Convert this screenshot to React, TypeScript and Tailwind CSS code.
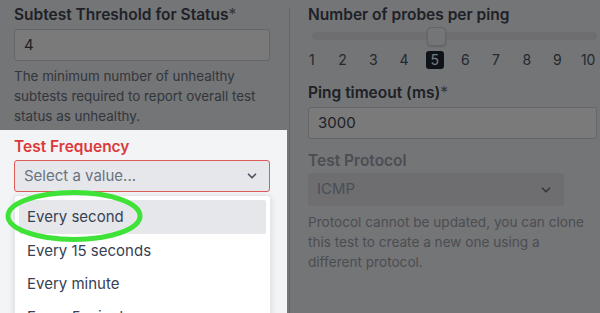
import React from "react";

const Chevron = ({ color }: { color: string }) => (
  <svg width="14" height="14" viewBox="0 0 20 20" fill="none">
    <path d="M5 7.5l5 5 5-5" stroke={color} strokeWidth="2.4" strokeLinecap="round" strokeLinejoin="round" />
  </svg>
);

export default function App() {
  const ticks = [1, 2, 3, 4, 5, 6, 7, 8, 9, 10];
  return (
    <div className="relative w-[600px] h-[313px] overflow-hidden bg-[#f3f4f6] font-['Inter',sans-serif] text-[#3f4652]">
      <div className="flex h-full">
        {/* left column */}
        <div className="w-[289px] shrink-0 pl-[14px] pr-[19px] pt-[5px] relative">
          <div className="text-[15.5px] leading-[20px] font-semibold">
            Subtest Threshold for Status<span className="text-[#6b7280] font-normal">*</span>
          </div>
          <div className="mt-[4px] h-[32px] rounded-[3px] border border-[#d1d5db] bg-white flex items-center px-[9px] text-[15px]">
            4
          </div>
          <div className="mt-[5px] text-[13.4px] leading-[20px] text-[#6b7280] pr-[10px]">
            The minimum number of unhealthy subtests required to report overall test status as unhealthy.
          </div>
          <div className="mt-[11px] text-[15.5px] leading-[20px] font-semibold text-[#dc3a3a]">
            Test Frequency
          </div>
          <div className="mt-[3px] h-[32px] rounded-[3px] border-[1.5px] border-[#e05a5a] bg-[#e5e7eb] flex items-center justify-between pl-[9px] pr-[10px] text-[15px] text-[#6b7280]">
            <span>Select a value...</span>
            <Chevron color="#4b5563" />
          </div>
          {/* dropdown menu */}
          <div className="absolute left-[14px] top-[195px] w-[257px] h-[140px] bg-white rounded-[3px] border border-[#e5e7eb] shadow-[0_2px_6px_rgba(0,0,0,0.12)] px-[4px] pt-[4px] text-[15px] text-[#374151]">
            <div className="h-[34px] rounded-[2px] bg-[#e5e7eb] flex items-center pl-[8px]">Every second</div>
            <div className="h-[34px] flex items-center pl-[8px]">Every 15 seconds</div>
            <div className="h-[33px] flex items-center pl-[8px]">Every minute</div>
            <div className="h-[33px] flex items-center pl-[8px]">Every 5 minutes</div>
          </div>
        </div>
        {/* divider */}
        <div className="w-px bg-[#d1d5db] mt-[8px] shrink-0" />
        {/* right column */}
        <div className="flex-1 pl-[18px] pt-[5px]">
          <div className="text-[15.5px] leading-[20px] font-semibold">Number of probes per ping</div>
          <div className="relative ml-[4px] mr-[10px] mt-[7px] h-[8px] rounded-full bg-[#e5e7eb]">
            <div className="absolute left-[115px] top-[-5px] w-[19px] h-[19px] rounded-[4px] bg-[#f3f4f6] border border-[#d1d5db] shadow-[0_1px_2px_rgba(0,0,0,0.15)]" />
          </div>
          <div className="mt-[11px] flex ml-[-11.4px] w-[310px]">
            {ticks.map((t) => (
              <div key={t} className="w-[30.7px] shrink-0 flex justify-center">
                <span
                  className={
                    t === 5
                      ? "w-[18px] h-[18px] rounded-[3px] bg-[#1f2937] text-white text-[14px] leading-[18px] text-center"
                      : "text-[14px] leading-[18px] text-[#4b5563]"
                  }
                >
                  {t}
                </span>
              </div>
            ))}
          </div>
          <div className="mt-[14px] text-[15.5px] leading-[20px] font-semibold">
            Ping timeout (ms)<span className="text-[#6b7280] font-normal">*</span>
          </div>
          <div className="mt-[4px] mr-[10px] h-[32px] rounded-[3px] border border-[#d1d5db] bg-white flex items-center px-[9px] text-[15px]">
            3000
          </div>
          <div className="mt-[12px] text-[15.5px] leading-[20px] font-semibold text-[#9ca3af]">Test Protocol</div>
          <div className="mt-[2px] w-[256px] h-[33px] rounded-[3px] bg-[#e5e7eb] flex items-center justify-between pl-[9px] pr-[11px] text-[15px] text-[#9ca3af]">
            <span>ICMP</span>
            <Chevron color="#6b7280" />
          </div>
          <div className="mt-[6px] text-[13.6px] leading-[20px] text-[#9ca3af] w-[285px]">
            Protocol cannot be updated, you can clone this test to create a new one using a different protocol.
          </div>
        </div>
      </div>
      {/* spotlight overlay */}
      <div className="absolute left-0 top-[130px] w-[287px] h-[200px] shadow-[0_0_0_9999px_rgba(0,0,0,0.52)] pointer-events-none" />
      {/* green annotation ellipse */}
      <svg className="absolute left-0 top-[186px] pointer-events-none" width="150" height="60" viewBox="0 0 150 60">
        <ellipse cx="74" cy="30" rx="66" ry="23.5" fill="none" stroke="#3fe236" strokeWidth="5" />
      </svg>
    </div>
  );
}
